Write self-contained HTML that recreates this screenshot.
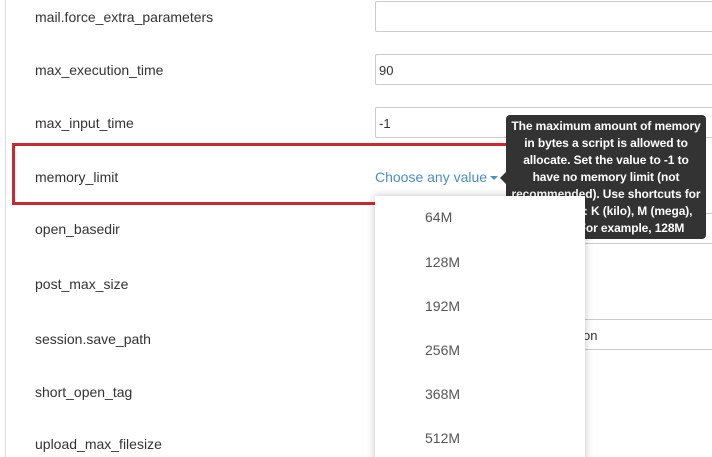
<!DOCTYPE html>
<html><head><style>
html,body{margin:0;width:712px;height:457px;overflow:hidden}
body{background:#fff;font-family:"Liberation Sans",sans-serif;position:relative}
.vl{position:absolute;left:5px;top:0;width:1px;height:457px;background:#ddd}
.lab{position:absolute;left:35px;font-size:14px;color:#333;line-height:16px}
.inp{position:absolute;left:375px;width:345px;height:31px;border:1px solid #ccc;border-radius:2px;font-size:13px;color:#333;box-sizing:border-box;padding:8px 0 0 3px}
.red{position:absolute;left:12px;top:143px;width:508px;height:62px;border:3px solid #c62a32;box-sizing:border-box}
.cv{position:absolute;left:375px;top:169px;font-size:14px;color:#4a8fc0}
.car{position:absolute;left:490px;top:176px;border-left:4px solid transparent;border-right:4px solid transparent;border-top:4px solid #4a8fc0}
.dd{position:absolute;left:375px;top:196px;width:210px;height:270px;background:#fff;box-shadow:0 0 8px rgba(0,0,0,.25);z-index:5}
.it{position:absolute;left:50px;font-size:14px;color:#555}
.tip{position:absolute;left:506px;top:115px;width:200px;height:124px;background:#333;border-radius:4px;color:#fff;font-size:12px;font-weight:bold;text-align:center;line-height:17px;padding:3px 0 0;box-sizing:border-box;white-space:nowrap;overflow:hidden;letter-spacing:-0.1px}
.ta{position:absolute;left:500px;top:172px;border-top:6px solid transparent;border-bottom:6px solid transparent;border-right:6px solid #333}
</style></head><body>
<div class="vl"></div>
<div class="lab" style="top:9px">mail.force_extra_parameters</div>
<div class="lab" style="top:62px">max_execution_time</div>
<div class="lab" style="top:115px">max_input_time</div>
<div class="lab" style="top:169px">memory_limit</div>
<div class="lab" style="top:221px">open_basedir</div>
<div class="lab" style="top:276px">post_max_size</div>
<div class="lab" style="top:331px">session.save_path</div>
<div class="lab" style="top:384px">short_open_tag</div>
<div class="lab" style="top:436px">upload_max_filesize</div>
<div class="inp" style="top:1px"></div>
<div class="inp" style="top:54px">90</div>
<div class="inp" style="top:107px">-1</div>
<div class="inp" style="top:213px"></div>
<div class="inp" style="top:319px;padding-left:207px">on</div>
<div class="red"></div>
<div class="cv">Choose any value</div>
<div class="car"></div>
<div class="ta"></div>
<div class="tip">The maximum amount of memory<br>in bytes a script is allowed to<br>allocate. Set the value to -1 to<br>have no memory limit (not<br>recommended). Use shortcuts for<br>byte values: K (kilo), M (mega),<br>G (giga). For example, 128M</div>
<div class="dd">
<div class="it" style="top:13px">64M</div>
<div class="it" style="top:58px">128M</div>
<div class="it" style="top:102px">192M</div>
<div class="it" style="top:146px">256M</div>
<div class="it" style="top:190px">368M</div>
<div class="it" style="top:234px">512M</div>
</div>
</body></html>
